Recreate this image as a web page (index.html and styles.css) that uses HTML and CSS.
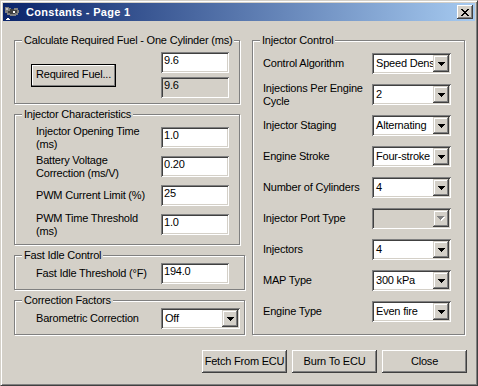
FILE: index.html
```html
<!DOCTYPE html>
<html>
<head>
    <meta charset="utf-8" />
    <title>Constants - Page 1</title>
    <link rel="stylesheet" href="styles.css">
</head>
<body>
<div class="window">
    <!-- Caption -->
    <div class="title-bar">
        <svg class="app-icon" viewBox="0 0 16 16" width="16" height="16">
            <path fill="#808080" d="M1 3h4v1h2v1h3V4h4v2h1v3h-1v2h-2v1H6v-1H3V9H1z"/>
            <path fill="#404040" d="M6 5h4v1h3v3h-2v1H6V9H4V7h2z"/>
            <path fill="#c0c0c0" d="M2 4h2v2H2z"/>
            <path fill="#fff" d="M9 7h2v2H9z"/>
            <path fill="#fff" d="M2 15h1v-1h2v1h1v1H2z"/>
        </svg>
        <div class="title">Constants - Page 1</div>
        <div class="close-btn">
            <svg viewBox="0 0 8 7" width="8" height="7">
                <path fill="#000" d="M0 0h2v1H0zM6 0h2v1H6zM1 1h2v1H1zM5 1h2v1H5zM2 2h4v1H2zM3 3h2v1H3zM2 4h4v1H2zM1 5h2v1H1zM5 5h2v1H5zM0 6h2v1H0zM6 6h2v1H6z"/>
            </svg>
        </div>
    </div>

    <div class="client">
        <div class="panels">
            <!-- Left column -->
            <div class="left-col">
                <div class="group g-fuel">
                    <div class="group-title">Calculate Required Fuel - One Cylinder (ms)</div>
                    <div class="fuel-body">
                        <button class="btn btn-default">Required Fuel...</button>
                        <div class="fuel-edits">
                            <div class="edit">9.6</div>
                            <div class="edit readonly">9.6</div>
                        </div>
                    </div>
                </div>

                <div class="group g-inj">
                    <div class="group-title">Injector Characteristics</div>
                    <div class="group-body rows-tight">
                        <div class="field">
                            <div class="label">Injector Opening Time<br>(ms)</div>
                            <div class="edit">1.0</div>
                        </div>
                        <div class="field">
                            <div class="label">Battery Voltage<br>Correction (ms/V)</div>
                            <div class="edit">0.20</div>
                        </div>
                        <div class="field">
                            <div class="label">PWM Current Limit (%)</div>
                            <div class="edit">25</div>
                        </div>
                        <div class="field">
                            <div class="label">PWM Time Threshold<br>(ms)</div>
                            <div class="edit">1.0</div>
                        </div>
                    </div>
                </div>

                <div class="group g-small">
                    <div class="group-title">Fast Idle Control</div>
                    <div class="group-body small-body">
                        <div class="field single">
                            <div class="label">Fast Idle Threshold (°F)</div>
                            <div class="edit">194.0</div>
                        </div>
                    </div>
                </div>

                <div class="group g-small">
                    <div class="group-title">Correction Factors</div>
                    <div class="group-body small-body">
                        <div class="field single">
                            <div class="label">Barometric Correction</div>
                            <div class="combo">
                                <span class="combo-text">Off</span>
                                <span class="combo-btn"><svg viewBox="0 0 7 4" width="7" height="4"><path d="M0 0H7V1H6V2H5V3H4V4H3V3H2V2H1V1H0Z"/></svg></span>
                            </div>
                        </div>
                    </div>
                </div>
            </div>

            <!-- Right column -->
            <div class="group g-control">
                <div class="group-title">Injector Control</div>
                <div class="group-body control-body">
                    <div class="field">
                        <div class="label">Control Algorithm</div>
                        <div class="combo">
                            <span class="combo-text">Speed Density</span>
                            <span class="combo-btn"><svg viewBox="0 0 7 4" width="7" height="4"><path d="M0 0H7V1H6V2H5V3H4V4H3V3H2V2H1V1H0Z"/></svg></span>
                        </div>
                    </div>
                    <div class="field">
                        <div class="label">Injections Per Engine<br>Cycle</div>
                        <div class="combo">
                            <span class="combo-text">2</span>
                            <span class="combo-btn"><svg viewBox="0 0 7 4" width="7" height="4"><path d="M0 0H7V1H6V2H5V3H4V4H3V3H2V2H1V1H0Z"/></svg></span>
                        </div>
                    </div>
                    <div class="field">
                        <div class="label">Injector Staging</div>
                        <div class="combo">
                            <span class="combo-text">Alternating</span>
                            <span class="combo-btn"><svg viewBox="0 0 7 4" width="7" height="4"><path d="M0 0H7V1H6V2H5V3H4V4H3V3H2V2H1V1H0Z"/></svg></span>
                        </div>
                    </div>
                    <div class="field">
                        <div class="label">Engine Stroke</div>
                        <div class="combo">
                            <span class="combo-text">Four-stroke</span>
                            <span class="combo-btn"><svg viewBox="0 0 7 4" width="7" height="4"><path d="M0 0H7V1H6V2H5V3H4V4H3V3H2V2H1V1H0Z"/></svg></span>
                        </div>
                    </div>
                    <div class="field">
                        <div class="label">Number of Cylinders</div>
                        <div class="combo">
                            <span class="combo-text">4</span>
                            <span class="combo-btn"><svg viewBox="0 0 7 4" width="7" height="4"><path d="M0 0H7V1H6V2H5V3H4V4H3V3H2V2H1V1H0Z"/></svg></span>
                        </div>
                    </div>
                    <div class="field">
                        <div class="label">Injector Port Type</div>
                        <div class="combo disabled">
                            <span class="combo-text"></span>
                            <span class="combo-btn"><svg viewBox="0 0 8 5" width="8" height="5"><path fill="#fff" d="M1 1H8V2H7V3H6V4H5V5H4V4H3V3H2V2H1Z"/><path fill="#808080" d="M0 0H7V1H6V2H5V3H4V4H3V3H2V2H1V1H0Z"/></svg></span>
                        </div>
                    </div>
                    <div class="field">
                        <div class="label">Injectors</div>
                        <div class="combo">
                            <span class="combo-text">4</span>
                            <span class="combo-btn"><svg viewBox="0 0 7 4" width="7" height="4"><path d="M0 0H7V1H6V2H5V3H4V4H3V3H2V2H1V1H0Z"/></svg></span>
                        </div>
                    </div>
                    <div class="field">
                        <div class="label">MAP Type</div>
                        <div class="combo">
                            <span class="combo-text">300 kPa</span>
                            <span class="combo-btn"><svg viewBox="0 0 7 4" width="7" height="4"><path d="M0 0H7V1H6V2H5V3H4V4H3V3H2V2H1V1H0Z"/></svg></span>
                        </div>
                    </div>
                    <div class="field">
                        <div class="label">Engine Type</div>
                        <div class="combo">
                            <span class="combo-text">Even fire</span>
                            <span class="combo-btn"><svg viewBox="0 0 7 4" width="7" height="4"><path d="M0 0H7V1H6V2H5V3H4V4H3V3H2V2H1V1H0Z"/></svg></span>
                        </div>
                    </div>
                </div>
            </div>
        </div>

        <!-- Dialog buttons -->
        <div class="actions">
            <button class="btn">Fetch From ECU</button>
            <button class="btn">Burn To ECU</button>
            <button class="btn">Close</button>
        </div>
    </div>
</div>
</body>
</html>
```

FILE: styles.css
```css
/* ============ Windows classic dialog ============ */
* {
  box-sizing: border-box;
}
body {
  margin: 0;
  padding: 0;
  font-family: "Liberation Sans", Arial, sans-serif;
  font-size: 11px;
  letter-spacing: -0.2px;
  color: #000;
  background-color: #d4d0c8;
}
.window {
  width: 478px;
  height: 386px;
  padding: 2px;
  border: 1px solid;
  border-color: #d4d0c8 #404040 #404040 #d4d0c8;
  box-shadow: inset 1px 1px #fff, inset -1px -1px #808080;
  background-color: #d4d0c8;
}

/* caption */
.title-bar {
  height: 18px;
  display: flex;
  align-items: center;
  padding: 0 2px 0 1px;
  background: linear-gradient(to right, #0a246a, #a6caf0);
  color: #fff;
}
.app-icon {
  flex: none;
}
.title {
  flex: 1;
  margin-left: 6px;
  font-weight: bold;
  letter-spacing: 0.3px;
}
.close-btn {
  width: 16px;
  height: 14px;
  display: flex;
  align-items: center;
  justify-content: center;
  background-color: #d4d0c8;
  box-shadow: inset -1px -1px #404040, inset 1px 1px #fff, inset -2px -2px #808080, inset 2px 2px #d4d0c8;
}

/* client area */
.client {
  padding: 19px 8px 0 11px;
}
.panels {
  display: flex;
  align-items: flex-start;
  gap: 6px;
}
.left-col {
  width: 232px;
  display: flex;
  flex-direction: column;
  gap: 10px;
}

/* etched group box */
.group {
  border: 1px solid #808080;
  box-shadow: inset 1px 1px #fff, 1px 1px #fff;
}
.group-title {
  width: fit-content;
  margin: -7px 0 -6px 7px;
  padding: 0 2px;
  line-height: 13px;
  white-space: nowrap;
  background-color: #d4d0c8;
}
.g-fuel {
  width: 226px;
  height: 64px;
}
.g-inj {
  width: 226px;
  height: 131px;
}
.g-small {
  width: 231px;
  height: 35px;
}
.g-control {
  width: 213px;
  height: 295px;
}

.fuel-body {
  display: flex;
  align-items: center;
  justify-content: space-between;
  padding: 11px 10px 0 16px;
}
.fuel-edits {
  display: flex;
  flex-direction: column;
  gap: 4px;
}

.group-body {
  display: flex;
  flex-direction: column;
}
.rows-tight {
  padding: 9px 0 0 21px;
  gap: 2px;
}
.small-body {
  padding: 7px 0 0 21px;
}
.control-body {
  padding: 9px 0 0 10px;
  gap: 4px;
}

.field {
  height: 27px;
  display: flex;
  align-items: center;
}
.field.single {
  height: 21px;
}
.label {
  width: 125px;
  flex: none;
  line-height: 13px;
  white-space: nowrap;
}
.control-body .label {
  width: 109px;
}

/* sunken edit */
.edit {
  width: 68px;
  height: 21px;
  flex: none;
  padding: 2px 3px 0;
  line-height: 13px;
  background-color: #fff;
  box-shadow: inset 1px 1px #808080, inset -1px -1px #fff, inset 2px 2px #404040, inset -2px -2px #d4d0c8;
}
.edit.readonly {
  background-color: #d4d0c8;
}

/* combo box */
.combo {
  width: 79px;
  height: 21px;
  flex: none;
  display: flex;
  padding: 2px;
  background-color: #fff;
  box-shadow: inset 1px 1px #808080, inset -1px -1px #fff, inset 2px 2px #404040, inset -2px -2px #d4d0c8;
}
.combo.disabled {
  background-color: #d4d0c8;
}
.combo-text {
  flex: 1;
  min-width: 0;
  overflow: hidden;
  white-space: nowrap;
  line-height: 17px;
  padding-left: 2px;
}
.combo-btn {
  width: 16px;
  height: 17px;
  flex: none;
  display: flex;
  align-items: center;
  justify-content: center;
  background-color: #d4d0c8;
  box-shadow: inset -1px -1px #404040, inset 1px 1px #d4d0c8, inset -2px -2px #808080, inset 2px 2px #fff;
}

/* push buttons */
.btn {
  width: 85px;
  height: 23px;
  padding: 0 0 1px;
  border: none;
  font: inherit;
  letter-spacing: inherit;
  line-height: 13px;
  color: #000;
  background-color: #d4d0c8;
  box-shadow: inset -1px -1px #404040, inset 1px 1px #fff, inset -2px -2px #808080, inset 2px 2px #d4d0c8;
}
.btn-default {
  border: 1px solid #000;
  box-shadow: inset -1px -1px #808080, inset 1px 1px #fff;
}
.actions {
  display: flex;
  justify-content: flex-end;
  gap: 5px;
  margin-top: 15px;
}
```
